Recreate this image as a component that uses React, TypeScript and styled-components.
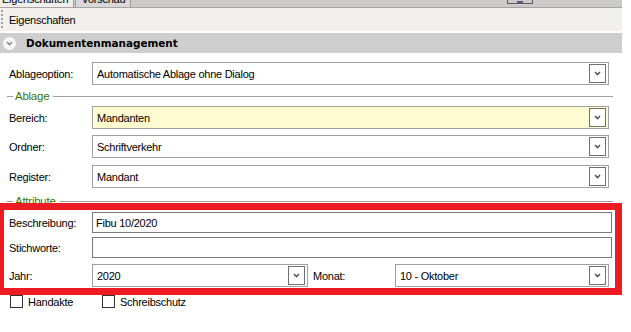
import React from 'react';
import styled, { createGlobalStyle } from 'styled-components';

const GlobalStyle = createGlobalStyle`
  html, body { margin: 0; padding: 0; background: #fff; }
  body {
    font-family: "Liberation Sans", Arial, sans-serif;
    font-size: 11px;
    letter-spacing: -0.25px;
    color: #000;
  }
`;

const Window = styled.div`
  width: 631px;
  height: 332px;
  overflow: hidden;
  background: #fff;
  position: relative;
`;

const Panel = styled.div`
  width: 622px;
  display: flex;
  flex-direction: column;
`;

const TabStrip = styled.div`
  height: 7px;
  border-bottom: 1px solid #a5a5a5;
  background: #cbcac8;
  display: flex;
  align-items: flex-end;
  overflow: hidden;
`;

const Tab = styled.div<{ $active?: boolean }>`
  height: 18px;
  box-sizing: border-box;
  display: flex;
  align-items: flex-end;
  padding: 0 5px 2px;
  margin-left: ${p => (p.$active ? '-4px' : '1px')};
  background: ${p => (p.$active ? '#f0efeb' : '#d9d9d9')};
  border: 1px solid #a0a0a0;
  border-bottom: none;
  line-height: 12px;
`;

const PinButton = styled.div`
  margin-left: auto;
  margin-right: 89px;
  margin-bottom: 3px;
  width: 26px;
  height: 12px;
  box-sizing: border-box;
  border: 1px solid #5c5c6c;
  display: flex;
  justify-content: center;
  align-items: flex-end;
  > span {
    width: 6px;
    height: 2px;
    background: #5c5c6c;
  }
`;

const Toolbar = styled.div`
  height: 23px;
  background: #f1f0ec;
  display: flex;
  align-items: center;
  gap: 6px;
  border-bottom: 2px solid #fff;
`;

const Grip = styled.div`
  width: 2px;
  height: 20px;
  margin-left: 1px;
  background: repeating-linear-gradient(to bottom, #a3a3a3 0 2px, transparent 2px 4px);
`;

const SectionHeader = styled.div`
  height: 20px;
  background: #cecece;
  display: flex;
  align-items: center;
  padding-left: 3px;
  gap: 10px;
  font-family: "DejaVu Sans", Verdana, sans-serif;
  font-weight: bold;
  font-size: 10.4px;
  letter-spacing: 0;
`;

const Toggle = styled.div`
  width: 13px;
  height: 13px;
  border-radius: 50%;
  background: #f7f7f7;
  display: flex;
  align-items: center;
  justify-content: center;
`;

const Body = styled.div`
  display: flex;
  flex-direction: column;
  padding: 0 13px 0 7px;
`;

const Row = styled.div<{ $top: number }>`
  display: grid;
  grid-template-columns: 85px 1fr;
  align-items: center;
  margin-top: ${p => p.$top}px;
`;

const SplitRow = styled(Row)`
  grid-template-columns: 85px 216px 87px 1fr;
`;

const Label = styled.span<{ $indent?: number }>`
  padding-left: ${p => p.$indent ?? 2}px;
  white-space: nowrap;
`;

const Combo = styled.div<{ $bg?: string }>`
  height: 23px;
  box-sizing: border-box;
  border: 1px solid #a0a0a0;
  background: ${p => p.$bg ?? '#fff'};
  display: flex;
  align-items: center;
  padding-left: 4px;
  white-space: nowrap;
  > span { flex: 1; }
`;

const DropButton = styled.div`
  width: 17px;
  height: 19px;
  box-sizing: border-box;
  margin-right: 2px;
  border: 1px solid #707070;
  background: #fff;
  display: flex;
  align-items: center;
  justify-content: center;
`;

const TextBox = styled.div`
  height: 21px;
  box-sizing: border-box;
  margin-right: -3px;
  border: 1px solid #7a7a7a;
  background: #fff;
  display: flex;
  align-items: center;
  padding-left: 3px;
`;

const GroupHeader = styled.div<{ $top: number }>`
  display: flex;
  align-items: center;
  margin-top: ${p => p.$top}px;
  margin-right: -4px;
  height: 14px;
  color: #3d7500;
  font-size: 11.5px;
  &::before {
    content: '';
    width: 6px;
    height: 1px;
    background: #a0a0a0;
    margin-right: 2px;
  }
  &::after {
    content: '';
    flex: 1;
    height: 1px;
    background: #a0a0a0;
    margin-left: 4px;
  }
`;

const CheckRow = styled.div`
  display: flex;
  margin-top: 8px;
  padding-left: 3px;
`;

const CheckItem = styled.label<{ $width: number }>`
  width: ${p => p.$width}px;
  display: flex;
  align-items: center;
  gap: 5px;
`;

const Box = styled.span`
  width: 13px;
  height: 13px;
  box-sizing: border-box;
  border: 1px solid #333;
  background: #fff;
`;

const Highlight = styled.div`
  position: absolute;
  left: -3px;
  top: 203px;
  width: 625px;
  height: 92px;
  box-sizing: border-box;
  border: 7px solid #ed1c24;
  pointer-events: none;
`;

const Chevron = ({ color = '#555' }: { color?: string }) => (
  <svg width="7" height="5" viewBox="0 0 7 5">
    <polyline points="1,1 3.5,3.5 6,1" fill="none" stroke={color} strokeWidth="1.6" />
  </svg>
);

const Select = ({ value, bg }: { value: string; bg?: string }) => (
  <Combo $bg={bg}>
    <span>{value}</span>
    <DropButton>
      <Chevron />
    </DropButton>
  </Combo>
);

export default function App() {
  return (
    <Window>
      <GlobalStyle />
      <Panel>
        <TabStrip>
          <Tab $active>Eigenschaften</Tab>
          <Tab>Vorschau</Tab>
          <PinButton>
            <span />
          </PinButton>
        </TabStrip>
        <Toolbar>
          <Grip />
          <span>Eigenschaften</span>
        </Toolbar>
        <SectionHeader>
          <Toggle>
            <Chevron color="#8a8a8a" />
          </Toggle>
          <span>Dokumentenmanagement</span>
        </SectionHeader>
        <Body>
          <Row $top={9}>
            <Label>Ablageoption:</Label>
            <Select value="Automatische Ablage ohne Dialog" />
          </Row>
          <GroupHeader $top={4}>Ablage</GroupHeader>
          <Row $top={3}>
            <Label>Bereich:</Label>
            <Select value="Mandanten" bg="#fffcd2" />
          </Row>
          <Row $top={6}>
            <Label>Ordner:</Label>
            <Select value="Schriftverkehr" />
          </Row>
          <Row $top={7}>
            <Label>Register:</Label>
            <Select value="Mandant" />
          </Row>
          <GroupHeader $top={6}>Attribute</GroupHeader>
          <Row $top={4}>
            <Label>Beschreibung:</Label>
            <TextBox>Fibu 10/2020</TextBox>
          </Row>
          <Row $top={4}>
            <Label>Stichworte:</Label>
            <TextBox />
          </Row>
          <SplitRow $top={6}>
            <Label>Jahr:</Label>
            <Select value="2020" />
            <Label $indent={5}>Monat:</Label>
            <Select value="10 - Oktober" />
          </SplitRow>
          <CheckRow>
            <CheckItem $width={92}>
              <Box />
              Handakte
            </CheckItem>
            <CheckItem $width={120}>
              <Box />
              Schreibschutz
            </CheckItem>
          </CheckRow>
        </Body>
      </Panel>
      <Highlight />
    </Window>
  );
}
